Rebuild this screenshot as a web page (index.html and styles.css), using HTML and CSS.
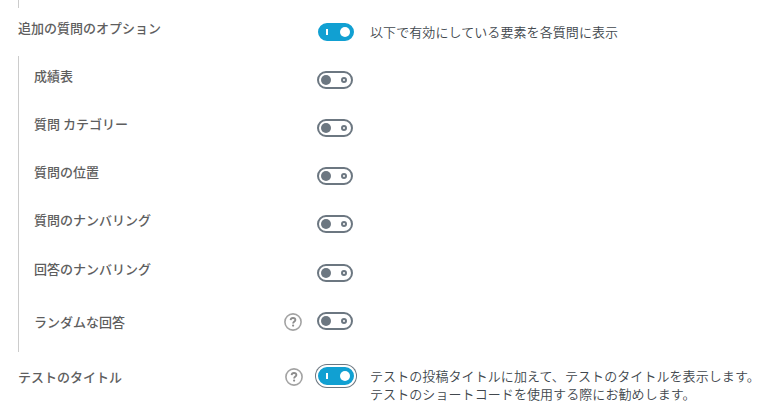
FILE: index.html
```
<!DOCTYPE html>
<html lang="ja">

<head>
  <meta charset="utf-8">
  <title>追加の質問のオプション</title>
  <link rel="stylesheet" href="styles.css">
</head>

<body>
  <svg class="symbols" xmlns="http://www.w3.org/2000/svg">
    <symbol id="help" viewBox="0 0 18 18">
      <circle cx="9" cy="9" r="8.1" fill="none" stroke="#a3a3a3" stroke-width="1.6" />
      <path d="M6.6 7.1C6.7 5.7 7.7 5 9 5s2.4.7 2.4 2c0 1.6-2.3 1.6-2.3 3.5" fill="none" stroke="#8c8c8c" stroke-width="1.8" />
      <circle cx="9.1" cy="12.6" r="1.1" fill="#8c8c8c" />
    </symbol>
  </svg>
  <div class="settings">
    <div class="sub-settings previous"></div>
    <div class="row">
      <div class="label">追加の質問のオプション</div>
      <div class="help"></div>
      <div class="switch on"></div>
      <div class="description">以下で有効にしている要素を各質問に表示</div>
    </div>
    <div class="sub-settings">
      <div class="row">
        <div class="label">成績表</div>
        <div class="help"></div>
        <div class="switch"></div>
      </div>
      <div class="row">
        <div class="label">質問 カテゴリー</div>
        <div class="help"></div>
        <div class="switch"></div>
      </div>
      <div class="row">
        <div class="label">質問の位置</div>
        <div class="help"></div>
        <div class="switch"></div>
      </div>
      <div class="row numbering">
        <div class="label">質問のナンバリング</div>
        <div class="help"></div>
        <div class="switch"></div>
      </div>
      <div class="row">
        <div class="label">回答のナンバリング</div>
        <div class="help"></div>
        <div class="switch"></div>
      </div>
      <div class="row with-help">
        <div class="label">ランダムな回答</div>
        <div class="help"><svg><use href="#help" /></svg></div>
        <div class="switch"></div>
      </div>
    </div>
    <div class="row with-help">
      <div class="label">テストのタイトル</div>
      <div class="help"><svg><use href="#help" /></svg></div>
      <div class="switch on focus"></div>
      <div class="description">テストの投稿タイトルに加えて、テストのタイトルを表示します。<br>テストのショートコードを使用する際にお勧めします。</div>
    </div>
  </div>
</body>

</html>
```

FILE: styles.css
```
body {
  margin: 0;
  background: #ffffff;
  color: #41474d;
  font-family: "Noto Sans CJK JP", sans-serif;
  font-size: 13px;
  line-height: 18px;
}

.symbols {
  display: none;
}

.settings {
  margin-left: 18px;
}

.row {
  display: grid;
  grid-template-columns: 267px 33px 36px 1fr;
  align-items: start;
  box-sizing: border-box;
  height: 48px;
  padding-top: 15px;
}

.label {
  margin-top: -4px;
  color: #5e5e5e;
  font-weight: 500;
}

.help svg {
  display: block;
  width: 18px;
  height: 18px;
}

.description {
  padding-left: 16px;
  font-weight: 350;
  letter-spacing: 0.08px;
  white-space: nowrap;
}

.sub-settings {
  border-left: 1px solid #cccccc;
  padding-left: 15px;
}

.sub-settings .row {
  grid-template-columns: 250px 33px 36px 1fr;
}

.previous {
  height: 8px;
}

.sub-settings .numbering {
  height: 49px;
}

.with-help,
.sub-settings .with-help {
  height: 55px;
}

.with-help .label,
.with-help .help {
  margin-top: 1px;
}

/* switch */
.switch {
  display: flex;
  align-items: center;
  justify-content: space-between;
  box-sizing: border-box;
  width: 36px;
  height: 18px;
  padding: 0 4px 0 2px;
  border: 2px solid #6c7781;
  border-radius: 9px;
}

.switch::before {
  content: "";
  width: 10px;
  height: 10px;
  border-radius: 50%;
  background: #6c7781;
}

.switch::after {
  content: "";
  box-sizing: border-box;
  width: 6px;
  height: 6px;
  border: 2px solid #6c7781;
  border-radius: 50%;
}

.switch.on {
  padding: 0 2px 0 6px;
  border-color: #11a0d2;
  background: #11a0d2;
}

.switch.on::before {
  width: 2px;
  height: 6px;
  border-radius: 0;
  background: #ffffff;
}

.switch.on::after {
  width: 10px;
  height: 10px;
  border: none;
  background: #ffffff;
}

.switch.focus {
  box-shadow: 0 0 0 2px #ffffff, 0 0 0 3px #6c7781;
}
```
